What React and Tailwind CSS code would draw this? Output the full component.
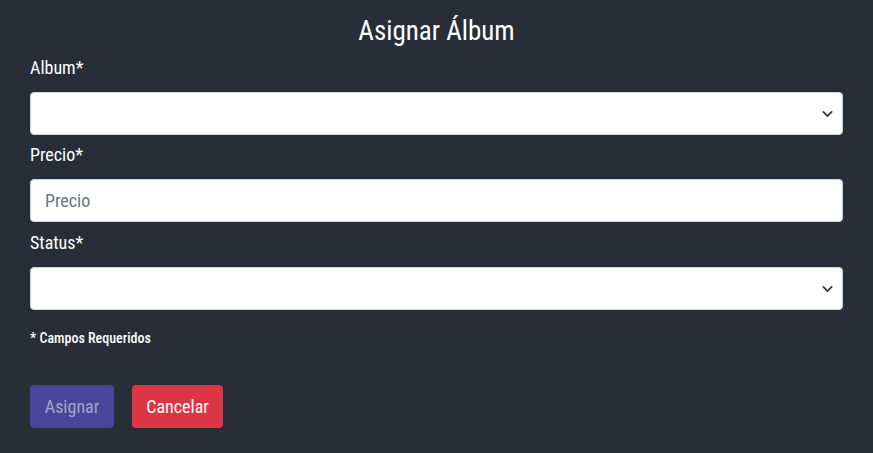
import React from "react";

const Chevron = () => (
  <svg className="pointer-events-none absolute right-[9px] top-1/2 -translate-y-1/2" width="11" height="11" viewBox="0 0 16 16">
    <path d="M2 5l6 6 6-6" fill="none" stroke="#343a40" strokeWidth="2.6" strokeLinecap="round" strokeLinejoin="round" />
  </svg>
);

const Label = ({ children, mt }) => (
  <div className={`text-[18px] leading-[24px] font-normal text-white mb-[12px] ${mt}`}>{children}</div>
);

const SelectBox = () => (
  <div className="relative h-[43px] w-full rounded-[4px] border border-[#ced4da] bg-white">
    <Chevron />
  </div>
);

export default function App() {
  return (
    <div
      className="min-h-[453px] w-[873px] bg-[#282d37] px-[30px] pt-[13px]"
      style={{ fontFamily: "'Roboto', 'Liberation Sans', sans-serif", fontStretch: "condensed" }}
    >
      <h1 className="text-center text-[27px] leading-[36px] font-normal text-white mb-[7px]">Asignar Álbum</h1>
      <Label mt="">Album*</Label>
      <SelectBox />
      <Label mt="mt-[8px]">Precio*</Label>
      <div className="flex h-[43px] w-full items-center rounded-[4px] border border-[#ced4da] bg-white px-[14px] text-[18px] text-[#6c757d]">
        Precio
      </div>
      <Label mt="mt-[9px]">Status*</Label>
      <SelectBox />
      <div className="mt-[20px] text-[14px] leading-[16px] font-medium text-white">* Campos Requeridos</div>
      <div className="mt-[39px] flex gap-[18px]">
        <button className="h-[43px] w-[84px] rounded-[4px] bg-[#4a4598] text-[18px] text-[#a7a5c9]">Asignar</button>
        <button className="h-[43px] w-[91px] rounded-[4px] bg-[#dc3545] text-[18px] text-white">Cancelar</button>
      </div>
    </div>
  );
}
